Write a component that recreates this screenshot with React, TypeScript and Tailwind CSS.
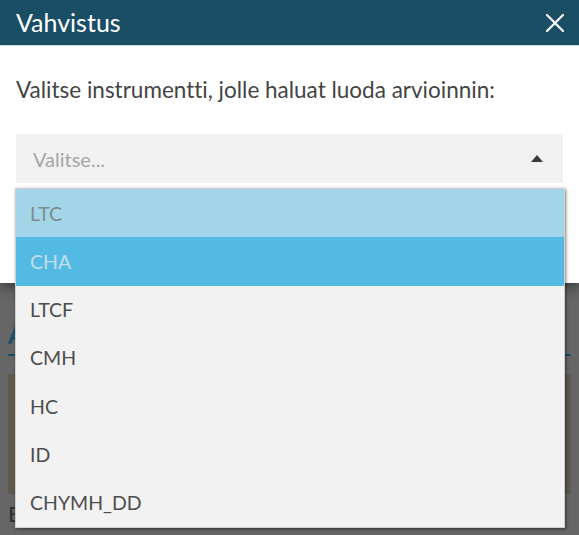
import React from "react";

const items = ["LTC", "CHA", "LTCF", "CMH", "HC", "ID", "CHYMH_DD"];

export default function App() {
  return (
    <div
      className="relative w-[579px] h-[535px] overflow-hidden bg-[#666666] [font-variant-ligatures:none]"
      style={{ fontFamily: "Lato, 'Noto Sans', sans-serif" }}
    >
      {/* dimmed page behind */}
      <div className="pt-[322px] px-[8px] flex flex-col">
        <div className="text-[24px] font-bold leading-[26px] text-[#16506a]">A</div>
        <div className="mt-[6px] h-[2px] bg-[#16506a]" />
        <div className="mt-[18px] h-[120px] bg-[#5f5b4c]" />
        <div className="mt-[8px] text-[22px] leading-[24px] text-[#2f2f2f]">E</div>
      </div>

      {/* modal */}
      <div className="absolute top-0 left-0 right-0 h-[283px] bg-white shadow-[0_4px_12px_rgba(0,0,0,0.45)]">
        <div className="h-[46px] bg-[#194e64] flex items-center justify-between pl-[16px] pr-[12px] border-b border-[#c9dbe2]">
          <span className="text-white text-[25px] leading-none">Vahvistus</span>
          <svg width="20" height="20" viewBox="0 0 20 20" className="mr-[2px]">
            <path d="M2 2 L18 18 M18 2 L2 18" stroke="white" strokeWidth="2.2" strokeLinecap="round" />
          </svg>
        </div>
        <div className="px-[16px]">
          <p className="mt-[31px] text-[22.5px] leading-[26px] text-[#444444]">
            Valitse instrumentti, jolle haluat luoda arvioinnin:
          </p>
          <div className="mt-[31px] h-[49px] bg-[#f1f1f1] flex items-center justify-between pl-[17px] pr-[20px]">
            <span className="text-[20px] text-[#a6a6a6]">Valitse...</span>
            <svg width="12" height="7" viewBox="0 0 12 7">
              <path d="M0 7 L6 0 L12 7 Z" fill="#3a3a3a" />
            </svg>
          </div>
        </div>
      </div>

      {/* dropdown */}
      <div className="absolute top-[188px] left-[15px] w-[550px] border border-[#d0d0d0] bg-[#f2f2f2] shadow-[1px_1px_3px_rgba(0,0,0,0.5)]">
        {items.map((it, i) => (
          <div
            key={it}
            className={
              "h-[48.3px] flex items-center pl-[14px] text-[19.5px] " +
              (i === 0
                ? "bg-[#a2d5e8] text-[#7e8c92]"
                : i === 1
                ? "bg-[#52bae3] text-[#c5dde8]"
                : "text-[#4d4d4d]")
            }
          >
            {it}
          </div>
        ))}
      </div>
    </div>
  );
}
